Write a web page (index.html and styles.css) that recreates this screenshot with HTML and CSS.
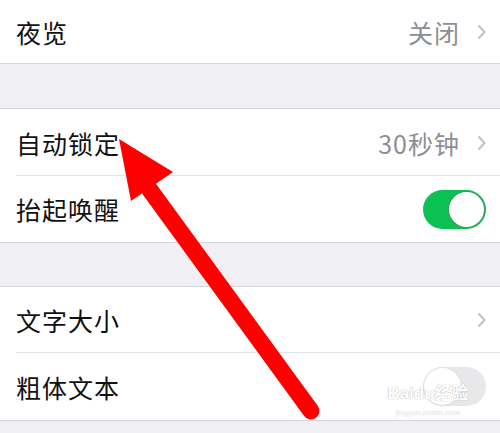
FILE: index.html
```html
<!DOCTYPE html>
<html>
<head>
<meta http-equiv="Content-Type" content="text/html; charset=UTF-8">
<title>显示与亮度</title>
<link rel="stylesheet" href="styles.css">
</head>
<body>
<div class="screen">
  <div class="group first">
    <div class="row tall">
      <span class="label">夜览</span>
      <span class="value">关闭</span>
      <svg class="chevron" viewBox="0 0 9 16"><polyline points="1.5,1.5 7.5,8 1.5,14.5"/></svg>
    </div>
  </div>

  <div class="gap wide"></div>

  <div class="group">
    <div class="row sep big">
      <span class="label">自动锁定</span>
      <span class="value">30秒钟</span>
      <svg class="chevron" viewBox="0 0 9 16"><polyline points="1.5,1.5 7.5,8 1.5,14.5"/></svg>
    </div>
    <div class="row">
      <span class="label">抬起唤醒</span>
      <div class="toggle on"><div class="knob"></div></div>
    </div>
  </div>

  <div class="gap"></div>

  <div class="group">
    <div class="row sep">
      <span class="label">文字大小</span>
      <svg class="chevron" viewBox="0 0 9 16"><polyline points="1.5,1.5 7.5,8 1.5,14.5"/></svg>
    </div>
    <div class="row big">
      <span class="label">粗体文本</span>
      <div class="toggle off"><div class="knob"></div></div>
    </div>
  </div>

  <div class="bottom"></div>

  <!-- red arrow drawn over the screenshot -->
  <svg class="arrow" viewBox="0 0 500 433">
    <line x1="150" y1="190" x2="311" y2="411" stroke="#ff0000" stroke-width="17" stroke-linecap="round"/>
    <polygon points="119,139 173,172 131,201" fill="#ff0000"/>
  </svg>

  <div class="watermark">
    <div class="wm-logo">Bai<span class="paw">du</span>经验</div>
    <div class="wm-url">jingyan.baidu.com</div>
  </div>
</div>
</body>
</html>
```
FILE: styles.css
```css
body {
  margin: 0;
  font-family: "Noto Sans CJK SC", "Noto Sans", sans-serif;
  background-color: #efeff4;
  color: #111;
}
.screen {
  position: relative;
  width: 500px;
  height: 433px;
  overflow: hidden;
  background-color: #efeff4;
}
.group {
  background-color: #fff;
  border-top: 1px solid #d6d6da;
  border-bottom: 1px solid #d6d6da;
}
.group.first {
  border-top: none;
}
.gap {
  height: 43px;
}
.gap.wide {
  height: 44px;
}
.row {
  position: relative;
  display: flex;
  align-items: center;
  height: 66px;
  padding: 0 14px 0 16px;
}
.row.big {
  height: 67px;
}
.row.tall {
  height: 63px;
}
.row.sep::after {
  content: "";
  position: absolute;
  left: 16px;
  right: 0;
  bottom: 0;
  height: 1px;
  background-color: #e4e4e7;
}
.label {
  flex: 1;
  font-size: 25px;
  letter-spacing: 1px;
}
.value {
  font-size: 25px;
  color: #8e8e93;
  margin-right: 17px;
  letter-spacing: 1px;
}
.chevron {
  width: 9px;
  height: 16px;
  fill: none;
  stroke: #c4c4c8;
  stroke-width: 2.2;
}
.toggle {
  position: relative;
  width: 63px;
  height: 39px;
  border-radius: 20px;
}
.toggle.on {
  background-color: #0cc153;
}
.toggle.off {
  background-color: #e8e8ea;
}
.knob {
  position: absolute;
  top: 2px;
  width: 35px;
  height: 35px;
  border-radius: 50%;
  background-color: #fff;
}
.toggle.on .knob {
  right: 2px;
  box-shadow: 0 0 0 1px #3a9a5a;
}
.toggle.off .knob {
  left: 1px;
  top: 1px;
  width: 37px;
  height: 37px;
  box-shadow: 0 0 0 1px #e2e2e4, 0 1px 3px rgba(0, 0, 0, 0.08);
}
.bottom {
  height: 12px;
}
.arrow {
  position: absolute;
  left: 0;
  top: 0;
  width: 500px;
  height: 433px;
}
.watermark {
  position: absolute;
  left: 383px;
  top: 384px;
  width: 90px;
  text-align: center;
  color: #fff;
  font-family: "Liberation Sans", "Noto Sans CJK SC", sans-serif;
}
.wm-logo {
  font-size: 17px;
  font-weight: bold;
  line-height: 20px;
  text-shadow: 0 0 1px #b9b9b9, 0 0 1px #b9b9b9;
}
.wm-url {
  font-size: 8px;
  line-height: 10px;
  margin-top: 4px;
  text-shadow: 0 0 1px #bbb;
}
```
